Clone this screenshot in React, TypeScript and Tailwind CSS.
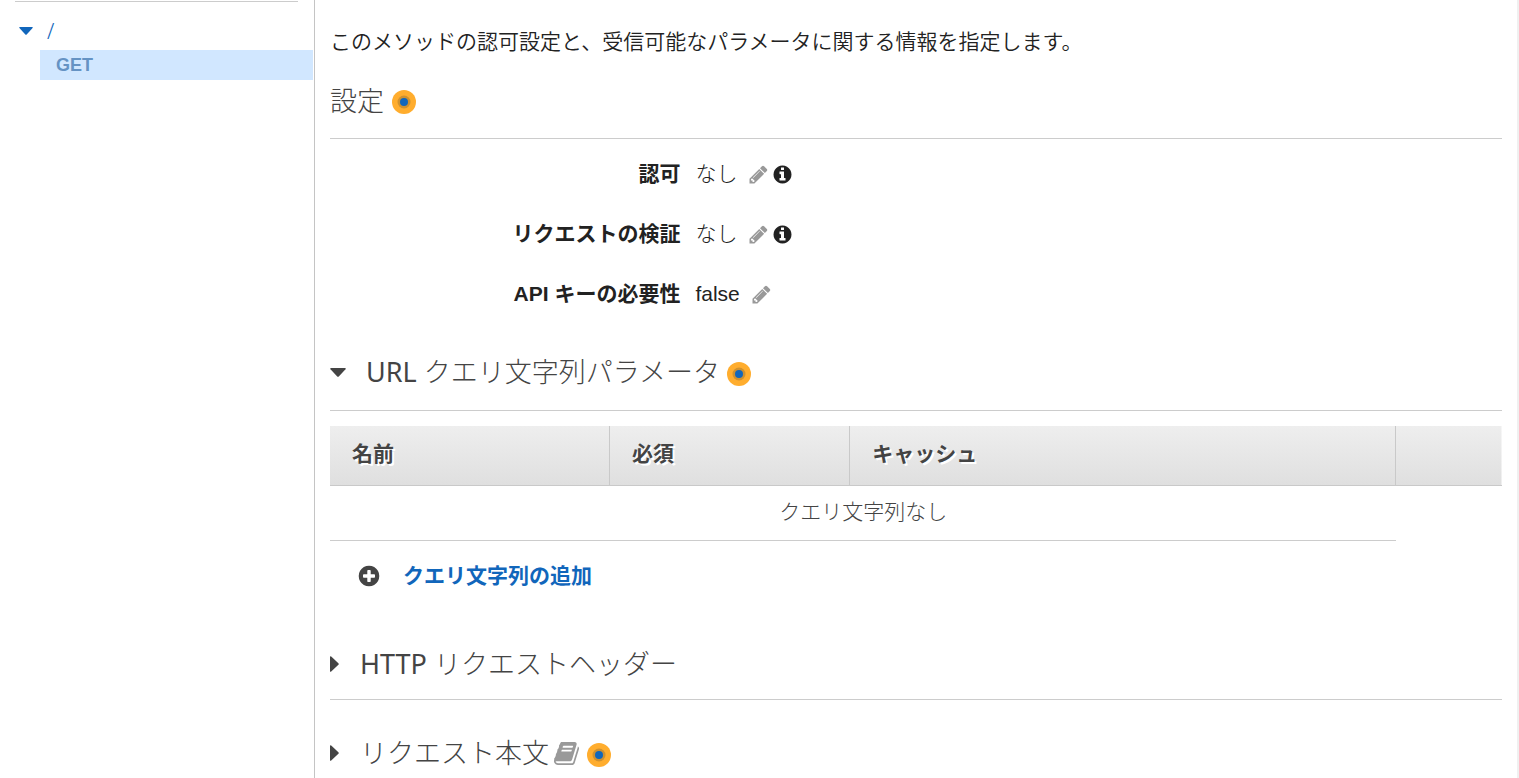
import React, { useState } from "react";

const CIRCLE =
  "q0 209-103 385.5t-279.5 279.5-385.5 103-385.5-103-279.5-279.5-103-385.5 103-385.5 279.5-279.5 385.5-103 385.5 103 279.5 279.5 103 385.5z";

const PENCIL =
  "M491 1536l91-91-235-235-91 91v107h128v128h107zm523-928q0-22-22-22-10 0-17 7l-542 542q-7 7-7 17 0 22 22 22 10 0 17-7l542-542q7-7 7-17zm-54-192l416 416-832 832h-416v-416l832-832zm683 96q0 53-37 90l-166 166-416-416 166-165q36-38 90-38 53 0 91 38l235 234q37 39 37 91z";

const INFO =
  "M1152 1376v-160q0-14-9-23t-23-9h-96v-512q0-14-9-23t-23-9h-320q-14 0-23 9t-9 23v160q0 14 9 23t23 9h96v320h-96q-14 0-23 9t-9 23v160q0 14 9 23t23 9h448q14 0 23-9t9-23zm-128-896v-160q0-14-9-23t-23-9h-192q-14 0-23 9t-9 23v160q0 14 9 23t23 9h192q14 0 23-9t9-23zm640 416" +
  CIRCLE;

const PLUS =
  "M1344 960v-128q0-26-19-45t-45-19h-256v-256q0-26-19-45t-45-19h-128q-26 0-45 19t-19 45v256h-256q-26 0-45 19t-19 45v128q0 26 19 45t45 19h256v256q0 26 19 45t45 19h128q26 0 45-19t19-45v-256h256q26 0 45-19t19-45zm320-64" +
  CIRCLE;

const BOOK =
  "M1703 478q40 57 18 129l-275 906q-19 64-76.5 107.5t-122.5 43.5h-923q-77 0-148.5-53.5t-99.5-131.5q-24-67-2-127 0-4 3-27t4-37q1-8-3-21.5t-3-19.5q2-11 8-21t16.5-23.5 16.5-23.5q23-38 45-91.5t30-91.5q3-10 .5-30t-.5-28q3-11 17-28t17-23q21-36 42-92t25-90q1-9-2.5-32t.5-28q4-13 22-30.5t22-22.5q19-26 42.5-84.5t27.5-96.5q1-8-3-25.5t-2-26.5q2-8 9-18t18-23 17-21q8-12 16.5-30.5t15-35 16-36 19.5-32 26.5-23.5 36-11.5 47.5 5.5l-1 3q38-9 51-9h761q74 0 114 56t18 130l-274 906q-36 119-71.5 153.5t-128.5 34.5h-869q-27 0-38 15-11 16-1 43 24 70 144 70h923q29 0 56-15.5t35-41.5l300-987q7-22 5-57 38 15 59 43zm-1064 2q-4 13 2 22.5t20 9.5h608q13 0 25.5-9.5t16.5-22.5l21-64q4-13-2-22.5t-20-9.5h-608q-13 0-25.5 9.5t-16.5 22.5zm-83 256q-4 13 2 22.5t20 9.5h608q13 0 25.5-9.5t16.5-22.5l21-64q4-13-2-22.5t-20-9.5h-608q-13 0-25.5 9.5t-16.5 22.5z";

function Glyph({ path, className }: { path: string; className: string }) {
  return (
    <svg viewBox="0 0 1792 1792" fill="currentColor" aria-hidden="true" className={className}>
      <path d={path} />
    </svg>
  );
}

function Caret({ open, className = "" }: { open: boolean; className?: string }) {
  return open ? (
    <svg viewBox="0 0 16 9" fill="currentColor" aria-hidden="true" className={className}>
      <path d="M1 0h14q1.400 0 .5 1.200l-6.700 7.200q-.8.800-1.600 0L.5 1.200Q-.400 0 1 0z" />
    </svg>
  ) : (
    <svg viewBox="0 0 9 16" fill="currentColor" aria-hidden="true" className={className}>
      <path d="M0 1q0-1.400 1.200-.5l7.200 6.700q.8.800 0 1.600l-7.200 6.700Q0 16.400 0 15z" />
    </svg>
  );
}

function Beacon() {
  return (
    <button type="button" aria-label="ヒント" className="mt-[3px] block shrink-0">
      <svg viewBox="0 0 24 24" className="size-6">
        <circle cx="12" cy="12" r="12" fill="#ffad2e" />
        <circle cx="12" cy="12" r="6.500" fill="#cf912f" />
        <circle cx="12" cy="12" r="4" fill="#1166bb" />
      </svg>
    </button>
  );
}

function Setting({ label, value, info }: { label: string; value: string; info?: boolean }) {
  return (
    <div className="flex h-[60px] items-center">
      <dt className="w-[29.9%] text-right font-bold">{label}</dt>
      <dd className="flex items-center pl-[15px] font-light">
        <span>{value}</span>
        <button type="button" aria-label={`${label}を編集`} className="ml-[11px] text-[#999]">
          <Glyph path={PENCIL} className="size-[21px]" />
        </button>
        {info && (
          <button type="button" aria-label={`${label}の情報`} className="ml-[3px] text-[#222]">
            <Glyph path={INFO} className="size-[21px]" />
          </button>
        )}
      </dd>
    </div>
  );
}

function Section({
  latin,
  title,
  initiallyOpen = false,
  extra,
  children,
}: {
  latin?: string;
  title: string;
  initiallyOpen?: boolean;
  extra?: React.ReactNode;
  children?: React.ReactNode;
}) {
  const [open, setOpen] = useState(initiallyOpen);
  return (
    <section>
      <div className={`flex items-center border-b border-[#ccc] text-[#444] ${open ? "h-[77px]" : "h-[71px]"}`}>
        <h2 className="font-['Noto_Sans','Noto_Sans_CJK_JP',sans-serif] text-[27px] leading-9 font-light">
          <button type="button" aria-expanded={open} onClick={() => setOpen(!open)} className="flex items-center">
            <Caret open={open} className={open ? "mr-5 h-[9px] w-4" : "mr-[21px] h-4 w-[9px]"} />
            <span>
              {latin && <span className="font-normal">{latin} </span>}
              {title}
            </span>
          </button>
        </h2>
        {extra}
      </div>
      {open && children}
    </section>
  );
}

const HEAD_CELL = "border-r border-b border-[#c9c9c9] pb-[3px] pl-[22px] text-left font-bold last:border-r-0";

export default function App() {
  return (
    <div className="flex min-h-screen border-r-2 border-[#f0f0f0] bg-white font-['Liberation_Sans','Noto_Sans_CJK_JP',sans-serif] text-[21px] leading-[30px] text-[#222]">
      <nav aria-label="リソース" className="w-[315px] shrink-0 border-r border-[#c4c4c4] pt-px">
        <div className="mr-4 ml-[15px] border-t border-[#ccc]" />
        <ul className="pt-[13px]">
          <li>
            <a
              href="#root"
              className="mb-1 flex h-[31px] items-center pl-[19px] font-['Noto_Sans',sans-serif] font-light text-[#1166bb]"
            >
              <Caret open className="mr-[14px] h-2 w-[14px]" />
              <span>/</span>
            </a>
            <ul className="mr-px ml-10">
              <li>
                <a
                  href="#get"
                  aria-current="page"
                  className="flex h-[30px] items-center bg-[#d1e7ff] pl-4 text-[18px] font-bold text-[#6593c4]"
                >
                  GET
                </a>
              </li>
            </ul>
          </li>
        </ul>
      </nav>

      <main className="min-w-0 flex-1 pt-[27px] pr-[15px] pl-[15px]">
        <p className="font-[350]">このメソッドの認可設定と、受信可能なパラメータに関する情報を指定します。</p>

        <section>
          <div className="mt-[6px] flex h-[76px] items-center gap-2 border-b border-[#ccc] text-[#444]">
            <h2 className="font-['Noto_Sans','Noto_Sans_CJK_JP',sans-serif] text-[27px] leading-9 font-light">設定</h2>
            <Beacon />
          </div>
          <dl className="pt-[5px] pb-[10px]">
            <Setting label="認可" value="なし" info />
            <Setting label="リクエストの検証" value="なし" info />
            <Setting label="API キーの必要性" value="false" />
          </dl>
        </section>

        <Section
          latin="URL"
          title="クエリ文字列パラメータ"
          initiallyOpen
          extra={
            <div className="ml-[7px]">
              <Beacon />
            </div>
          }
        >
          <table className="mt-[15px] w-full table-fixed border-separate border-spacing-0 text-[#444]">
            <colgroup>
              <col className="w-[23.9%]" />
              <col className="w-[20.5%]" />
              <col className="w-[46.6%]" />
              <col />
            </colgroup>
            <thead>
              <tr className="h-[60px] bg-linear-to-b from-[#eee] to-[#dfdfdf] [text-shadow:2px_2px_0_#fff]">
                <th scope="col" className={HEAD_CELL}>名前</th>
                <th scope="col" className={HEAD_CELL}>必須</th>
                <th scope="col" className={HEAD_CELL}>キャッシュ</th>
                <th scope="col" className={HEAD_CELL} />
              </tr>
            </thead>
            <tbody>
              <tr className="h-[55px]">
                <td colSpan={3} className="border-b border-[#ccc] pb-[3px] text-center font-light">
                  クエリ文字列なし
                </td>
                <td />
              </tr>
            </tbody>
          </table>
          <button type="button" className="flex h-[70px] items-center pl-[27px] font-bold text-[#1166bb]">
            <Glyph path={PLUS} className="mr-[22px] size-6 text-[#444]" />
            クエリ文字列の追加
          </button>
          <div className="h-[18px]" />
        </Section>

        <Section latin="HTTP" title="リクエストヘッダー" />

        <div className="pt-[18px]">
          <Section
            title="リクエスト本文"
            extra={
              <div className="ml-1 flex items-center gap-[7px]">
                <Glyph path={BOOK} className="size-[27px] text-[#999]" />
                <Beacon />
              </div>
            }
          />
        </div>
      </main>
    </div>
  );
}
